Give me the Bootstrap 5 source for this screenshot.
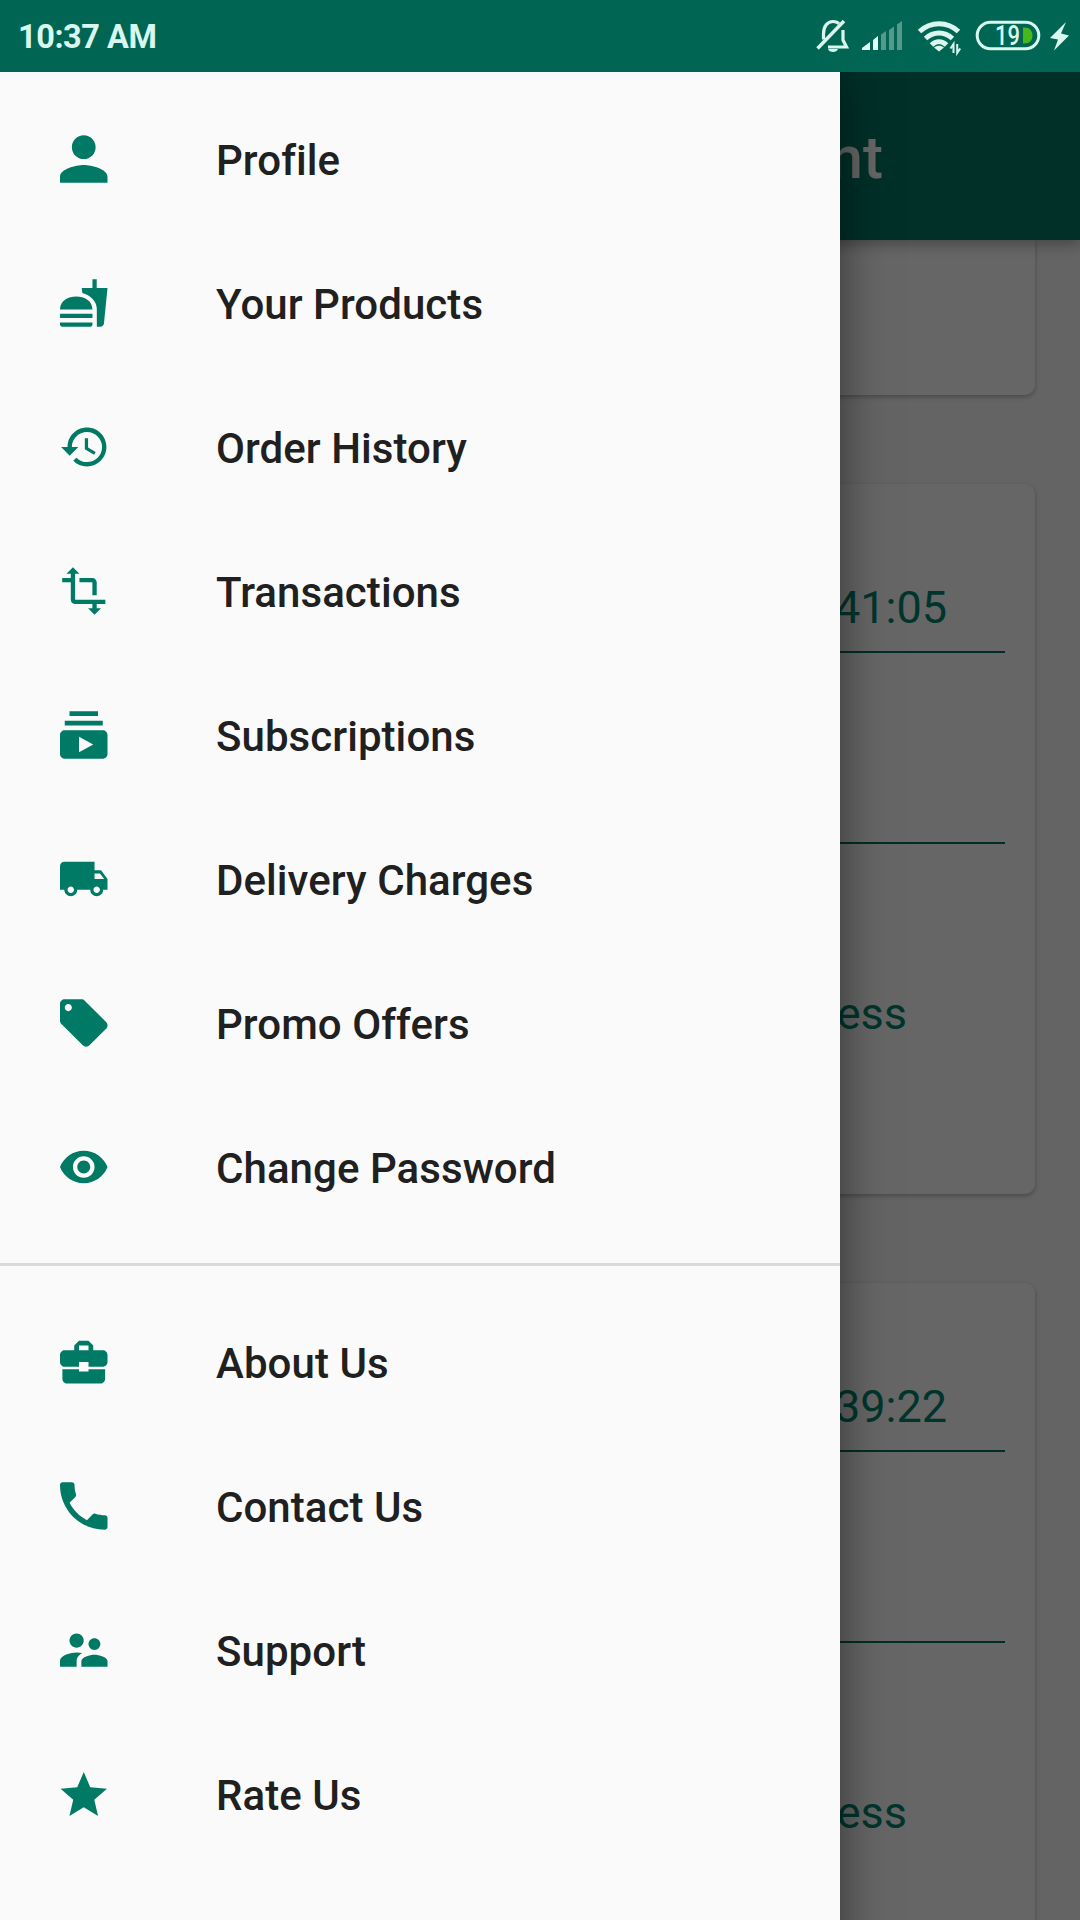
<!DOCTYPE html>
<html lang="en">
<head>
<meta charset="utf-8">
<meta name="viewport" content="width=device-width, initial-scale=1">
<title>Navigation drawer</title>
<link href="https://cdn.jsdelivr.net/npm/bootstrap@5.3.0/dist/css/bootstrap.min.css" rel="stylesheet">
<style>
  body { font-family: Roboto, sans-serif; background: #fafafa; width: 1080px; height: 1920px; overflow: hidden; }
  .status-bar { height: 72px; background: #006653; color: #d9f7ef; padding: 0 10px 0 18px; }
  .clock { font-size: 32.5px; font-weight: 700; line-height: 72px; letter-spacing: -.45px; padding-top: 2px; }
  .screen { height: 1848px; }
  .app-bar { height: 168px; background: #007864; color: #fff; padding-right: 197px; box-shadow: 0 4px 14px rgba(0,0,0,.32); z-index: 1; }
  .app-title { font-size: 60px; font-weight: 500; line-height: 168px; padding-top: 2px; }
  .orders { padding: 0 45px; gap: 89px; }
  .order { height: 710px; background: #fff; border-radius: 10px; box-shadow: 0 2px 5px rgba(0,0,0,.28); padding: 0 30px 0 0; color: #008670; font-size: 45px; line-height: 56px; }
  .order-tail { height: 155px; border-radius: 0 0 10px 10px; }
  .order-time { height: 169px; padding: 96px 58px 0 0; border-bottom: 2px solid #007460; }
  .order-blank { height: 191px; border-bottom: 2px solid #007460; }
  .order-state { padding: 142px 98px 0 0; }
  .scrim { background: rgba(0,0,0,.6); z-index: 2; }
  .drawer { width: 840px; height: 1910px; background: #fafafa; z-index: 3; padding-top: 15px; box-shadow: 0 0 44px rgba(0,0,0,.5); }
  .drawer-item { height: 144px; padding-left: 60px; color: #202020; }
  .drawer-item svg { width: 47.500px; height: 48px; fill: #007a64; }
  .drawer-item span { margin-left: 108.500px; font-size: 42px; font-weight: 500; line-height: 56px; padding-top: 4px; letter-spacing: .06px; }
  .split { height: 3px; margin: 24px 0; background: #dadada; }
</style>
</head>
<body>
<header class="status-bar d-flex justify-content-between align-items-center position-relative">
  <span class="clock">10:37 AM</span>
  <svg width="260" height="72" viewBox="810 0 260 72" fill="none" stroke="#d9f7ef">
    <path d="M823.500 39.500V34c0-8 4-12.500 9.500-12.500 2.500 0 4.500.8 6 2M843 30v10l3.500 7H828" stroke-width="3.200"/>
    <path d="M817.500 48.500 844 21" stroke-width="3.400"/>
    <path d="M828 49h10c-1 4-9 4-10 0z" fill="#d9f7ef" stroke="none"/>
    <g stroke="none"><path d="M862 50v-2l8-6v8zM873 40l5-4v14h-5z" fill="#e4fff8"/><path d="M881 34.500l5-3.500v19h-5zM889 30l5-3.500v23.500h-5zM897 24.500l5-3.500v29h-5z" fill="#55998b"/></g>
    <g stroke-width="5"><path d="M919.500 31.500c11-10.500 28-10.500 39 0M925.500 38.500c8-7.500 19-7.500 27 0M931.500 45c4.500-4.500 10.500-4.500 15 0"/></g>
    <path d="M934 47.500c3-2.500 7-2.500 10 0l-5 4z" fill="#d9f7ef" stroke="none"/>
    <path d="M953.500 53v-9l-3 4.500M957.200 44v9l3-4.500" stroke-width="2"/>
    <rect x="977.200" y="22.200" width="61.600" height="26.600" rx="13.300" stroke-width="3"/>
    <path d="M1023 27.500h1.500c5 0 8 3.500 8 8s-3 8-8 8h-1.500z" fill="#46b81c" stroke="none"/>
    <text x="995" y="45" fill="#d9f7ef" stroke="none" font-family="Roboto, sans-serif" font-size="27" font-weight="500" textLength="25" lengthAdjust="spacingAndGlyphs">19</text>
    <path d="M1066 22l-16 16 8 1.500-4 11 15-15-8-2z" fill="#d9f7ef" stroke="none"/>
  </svg>
</header>

<div class="screen position-relative overflow-hidden">
  <div class="app-bar position-relative d-flex justify-content-end"><span class="app-title">nt</span></div>
  <main class="orders d-flex flex-column">
    <section class="order order-tail flex-shrink-0"></section>
    <section class="order flex-shrink-0">
      <div class="order-time text-end">41:05</div>
      <div class="order-blank"></div>
      <div class="order-state text-end">ess</div>
    </section>
    <section class="order flex-shrink-0">
      <div class="order-time text-end">39:22</div>
      <div class="order-blank"></div>
      <div class="order-state text-end">ess</div>
    </section>
  </main>
  <div class="scrim position-absolute top-0 start-0 w-100 h-100"></div>
  <nav class="drawer position-absolute top-0 start-0">
    <a class="drawer-item d-flex align-items-center text-decoration-none"><svg viewBox="4 4 16 16"><path d="M12 12c2.210 0 4-1.790 4-4s-1.790-4-4-4-4 1.790-4 4 1.790 4 4 4zm0 2c-2.670 0-8 1.340-8 4v2h16v-2c0-2.660-5.330-4-8-4z"/></svg><span>Profile</span></a>
    <a class="drawer-item d-flex align-items-center text-decoration-none"><svg viewBox="1 1 22 22"><path d="M18.060 22.990h1.660c.84 0 1.530-.64 1.630-1.460L23 5.050h-5V1h-1.970v4.050h-4.970l.3 2.340c1.710.47 3.310 1.320 4.270 2.260 1.440 1.420 2.430 2.890 2.430 5.290v8.050zM1 21.990V21h15.030v.99c0 .55-.45 1-1.010 1H2.010c-.56 0-1.010-.45-1.010-1zm15.030-7c0-8-15.030-8-15.030 0h15.030zM1.020 17h15v2h-15z"/></svg><span>Your Products</span></a>
    <a class="drawer-item d-flex align-items-center text-decoration-none"><svg viewBox=".5 1 22 22"><path d="M13 3c-4.970 0-9 4.030-9 9H1l3.890 3.890.07.14L9 12H6c0-3.870 3.130-7 7-7s7 3.130 7 7-3.130 7-7 7c-1.930 0-3.680-.79-4.940-2.060l-1.420 1.420C8.270 19.990 10.510 21 13 21c4.970 0 9-4.030 9-9s-4.030-9-9-9zm-1 5v5l4.280 2.540.72-1.210-3.500-2.080V8H12z"/></svg><span>Order History</span></a>
    <a class="drawer-item d-flex align-items-center text-decoration-none"><svg viewBox="1 1 22 22"><path d="M22 18v-2H8V4h2L7 1 4 4h2v2H2v2h4v8c0 1.100.9 2 2 2h8v2h-2l3 3 3-3h-2v-2h4zM10 8h6v6h2V8c0-1.100-.9-2-2-2h-6v2z"/></svg><span>Transactions</span></a>
    <a class="drawer-item d-flex align-items-center text-decoration-none"><svg viewBox="2 2 20 20"><path d="M20 8H4V6h16v2zm-2-6H6v2h12V2zm4 10v8c0 1.100-.9 2-2 2H4c-1.100 0-2-.9-2-2v-8c0-1.100.9-2 2-2h16c1.100 0 2 .9 2 2zm-6 4l-6-3.270v6.530L16 16z"/></svg><span>Subscriptions</span></a>
    <a class="drawer-item d-flex align-items-center text-decoration-none"><svg viewBox="1 1 22 22"><path d="M20 8h-3V4H3c-1.100 0-2 .9-2 2v11h2c0 1.660 1.340 3 3 3s3-1.340 3-3h6c0 1.660 1.340 3 3 3s3-1.340 3-3h2v-5l-3-4zM6 18.500c-.83 0-1.500-.67-1.500-1.500s.67-1.500 1.500-1.500 1.500.67 1.500 1.500-.67 1.500-1.500 1.500zm13.500-9l1.960 2.500H17V9.500h2.500zm-1.500 9c-.83 0-1.500-.67-1.500-1.500s.67-1.500 1.500-1.500 1.500.67 1.500 1.500-.67 1.500-1.500 1.500z"/></svg><span>Delivery Charges</span></a>
    <a class="drawer-item d-flex align-items-center text-decoration-none"><svg viewBox="2 2 20 20"><path d="M21.410 11.580l-9-9C12.050 2.220 11.550 2 11 2H4c-1.100 0-2 .9-2 2v7c0 .55.220 1.050.59 1.420l9 9c.36.36.86.58 1.410.58.550 0 1.050-.22 1.410-.59l7-7c.37-.36.590-.86.590-1.410 0-.55-.23-1.060-.59-1.420zM5.500 7C4.670 7 4 6.330 4 5.500S4.670 4 5.500 4 7 4.670 7 5.500 6.330 7 5.500 7z"/></svg><span>Promo Offers</span></a>
    <a class="drawer-item d-flex align-items-center text-decoration-none"><svg viewBox="1 1 22 22"><path d="M12 4.500C7 4.500 2.730 7.610 1 12c1.730 4.390 6 7.500 11 7.500s9.270-3.110 11-7.500c-1.730-4.390-6-7.500-11-7.500zM12 17c-2.760 0-5-2.240-5-5s2.240-5 5-5 5 2.240 5 5-2.240 5-5 5zm0-8c-1.660 0-3 1.340-3 3s1.340 3 3 3 3-1.340 3-3-1.340-3-3-3z"/></svg><span>Change Password</span></a>
    <div class="split"></div>
    <a class="drawer-item d-flex align-items-center text-decoration-none"><svg viewBox="2 2 20 20"><path d="M10 16v-1H3.010L3 19c0 1.110.89 2 2 2h14c1.110 0 2-.89 2-2v-4h-7v1h-4zm10-9h-4.010V5l-2-2h-4l-2 2v2H4c-1.100 0-2 .9-2 2v3c0 1.110.89 2 2 2h6v-2h4v2h6c1.100 0 2-.9 2-2V9c0-1.100-.9-2-2-2zm-6 0h-4V5h4v2z"/></svg><span>About Us</span></a>
    <a class="drawer-item d-flex align-items-center text-decoration-none"><svg viewBox="3 3 18 18"><path d="M20 15.500c-1.250 0-2.450-.2-3.570-.57-.35-.11-.74-.03-1.020.24l-2.200 2.200c-2.830-1.440-5.150-3.750-6.590-6.590l2.200-2.210c.28-.26.36-.65.25-1C8.700 6.450 8.500 5.250 8.500 4c0-.55-.45-1-1-1H4c-.55 0-1 .45-1 1 0 9.390 7.610 17 17 17 .55 0 1-.45 1-1v-3.500c0-.55-.45-1-1-1z"/></svg><span>Contact Us</span></a>
    <a class="drawer-item d-flex align-items-center text-decoration-none"><svg viewBox="2 2 20 20"><path d="M16.500 12c1.380 0 2.490-1.120 2.490-2.500S17.880 7 16.500 7C15.120 7 14 8.120 14 9.500s1.120 2.500 2.500 2.500zM9 11c1.660 0 2.990-1.340 2.990-3S10.660 5 9 5C7.340 5 6 6.340 6 8s1.340 3 3 3zm7.500 3c-1.830 0-5.500.92-5.500 2.750V19h11v-2.250c0-1.830-3.670-2.750-5.500-2.750zM9 13c-2.330 0-7 1.170-7 3.500V19h7v-2.250c0-.85.33-2.340 2.370-3.470C10.500 13.100 9.660 13 9 13z"/></svg><span>Support</span></a>
    <a class="drawer-item d-flex align-items-center text-decoration-none"><svg viewBox="1.750 1.250 20.500 20.500"><path d="M12 17.270L18.180 21l-1.640-7.030L22 9.240l-7.190-.61L12 2 9.190 8.630 2 9.240l5.460 4.730L5.820 21z"/></svg><span>Rate Us</span></a>
  </nav>
</div>
<script src="https://cdn.jsdelivr.net/npm/bootstrap@5.3.0/dist/js/bootstrap.bundle.min.js"></script>
</body>
</html>
